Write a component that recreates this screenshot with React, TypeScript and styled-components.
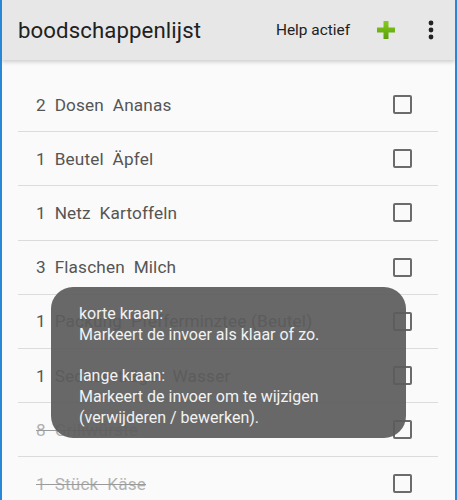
import React from 'react';
import styled, { createGlobalStyle } from 'styled-components';

const GlobalStyle = createGlobalStyle`
  html, body {
    margin: 0;
    padding: 0;
    background: #fafafa;
  }
  * {
    box-sizing: border-box;
  }
`;

const Screen = styled.div`
  position: relative;
  width: 457px;
  height: 500px;
  overflow: hidden;
  background: #fafafa;
  border-left: 2px solid #2a86d6;
  border-right: 2px solid #2a86d6;
  font-family: Roboto, "Noto Sans", sans-serif;
`;

const Toolbar = styled.header`
  display: flex;
  align-items: center;
  height: 60px;
  padding: 0 21px 0 16px;
  background: #e7e7e7;
  box-shadow: 0 2px 4px rgba(0, 0, 0, 0.18);
  position: relative;
  z-index: 1;
`;

const Title = styled.h1`
  flex: 1;
  margin: 0;
  font-size: 22.2px;
  font-weight: 400;
  color: #212121;
  letter-spacing: 0.1px;
`;

const HelpLabel = styled.span`
  font-size: 15.4px;
  color: #212121;
  margin-right: 26px;
`;

const IconButton = styled.button`
  display: flex;
  align-items: center;
  justify-content: center;
  padding: 0;
  border: none;
  background: transparent;
  width: ${p => p.$w}px;
  height: 40px;
  margin-right: ${p => p.$gap || 0}px;
`;

const List = styled.ul`
  list-style: none;
  margin: 0;
  padding: 18px 17px 0 16px;
`;

const Row = styled.li`
  display: flex;
  align-items: center;
  height: 54.2px;
  padding: 0 26px 0 18px;
  border-bottom: 1px solid #dcdcdc;
`;

const ItemText = styled.span`
  flex: 1;
  font-size: 17.2px;
  letter-spacing: 0.15px;
  white-space: pre;
  color: ${p => (p.$done ? '#b0b0b0' : '#555555')};
  text-decoration: ${p => (p.$done ? 'line-through' : 'none')};
  text-decoration-color: #9a9a9a;
`;

const Check = styled.span`
  width: 19px;
  height: 19px;
  border: 2px solid #6b6b6b;
  border-radius: 2px;
`;

const Toast = styled.div`
  position: absolute;
  left: 49px;
  top: 287px;
  width: 355px;
  height: 151px;
  padding: 17px 20px 0 28px;
  border-radius: 22px;
  background: rgba(92, 92, 92, 0.93);
  color: #f2f2f2;
  font-size: 16px;
  line-height: 20.8px;
  white-space: pre-line;
  z-index: 2;
`;

const items = [
  { text: '2  Dosen  Ananas', done: false },
  { text: '1  Beutel  Äpfel', done: false },
  { text: '1  Netz  Kartoffeln', done: false },
  { text: '3  Flaschen  Milch', done: false },
  { text: '1  Packung  Pfefferminztee (Beutel)', done: false },
  { text: '1  Sechserträger  Wasser', done: false },
  { text: '8  Grillwürste', done: true },
  { text: '1  Stück  Käse', done: true },
];

const PlusIcon = () => (
  <svg width="20" height="20" viewBox="0 0 20 20">
    <defs>
      <linearGradient id="g" x1="0" y1="0" x2="0" y2="1">
        <stop offset="0" stopColor="#86cc1c" />
        <stop offset="1" stopColor="#5a9e0e" />
      </linearGradient>
    </defs>
    <path d="M7.5 1h5v6.5H19v5h-6.5V19h-5v-6.5H1v-5h6.5z" fill="url(#g)" />
  </svg>
);

const MoreIcon = () => (
  <svg width="6" height="20" viewBox="0 0 6 20">
    <circle cx="3" cy="3" r="2.4" fill="#222" />
    <circle cx="3" cy="10" r="2.4" fill="#222" />
    <circle cx="3" cy="17" r="2.4" fill="#222" />
  </svg>
);

export default function App() {
  return (
    <>
      <GlobalStyle />
      <Screen>
        <Toolbar>
          <Title>boodschappenlijst</Title>
          <HelpLabel>Help actief</HelpLabel>
          <IconButton $w={20} $gap={32}>
            <PlusIcon />
          </IconButton>
          <IconButton $w={6}>
            <MoreIcon />
          </IconButton>
        </Toolbar>
        <List>
          {items.map(item => (
            <Row key={item.text}>
              <ItemText $done={item.done}>{item.text}</ItemText>
              <Check />
            </Row>
          ))}
        </List>
        <Toast>
          {'korte kraan:\nMarkeert de invoer als klaar of zo.\n\nlange kraan:\nMarkeert de invoer om te wijzigen\n(verwijderen / bewerken).'}
        </Toast>
      </Screen>
    </>
  );
}
